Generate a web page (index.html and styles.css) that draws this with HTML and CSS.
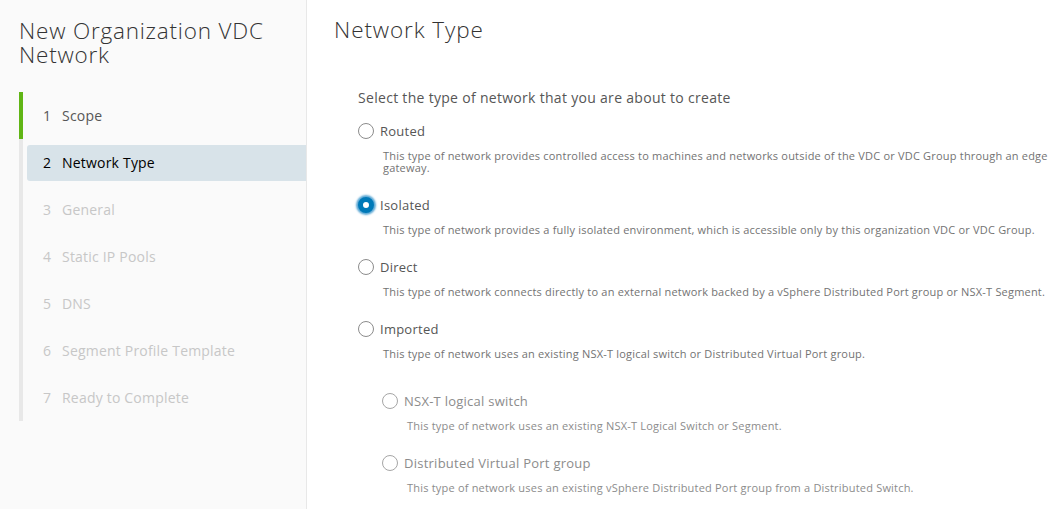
FILE: index.html
```html
<!DOCTYPE html>
<html lang="en">
<head>
<meta charset="utf-8">
<title>New Organization VDC Network</title>
<link rel="stylesheet" href="styles.css">
</head>
<body>
<div class="wizard">
  <aside class="sidebar">
    <h1 class="wizard-title">New Organization VDC Network</h1>
    <ol class="steps">
      <li class="step done"><div class="step-inner"><span class="num">1</span><span class="label">Scope</span></div></li>
      <li class="step current"><div class="step-inner"><span class="num">2</span><span class="label">Network Type</span></div></li>
      <li class="step disabled"><div class="step-inner"><span class="num">3</span><span class="label">General</span></div></li>
      <li class="step disabled"><div class="step-inner"><span class="num">4</span><span class="label">Static IP Pools</span></div></li>
      <li class="step disabled"><div class="step-inner"><span class="num">5</span><span class="label">DNS</span></div></li>
      <li class="step disabled"><div class="step-inner"><span class="num">6</span><span class="label">Segment Profile Template</span></div></li>
      <li class="step disabled"><div class="step-inner"><span class="num">7</span><span class="label">Ready to Complete</span></div></li>
    </ol>
  </aside>
  <main class="content">
    <h2 class="page-title">Network Type</h2>
    <div class="form">
      <p class="prompt">Select the type of network that you are about to create</p>

      <div class="option">
        <label class="radio"><span class="circle"></span><span class="opt-label">Routed</span></label>
        <p class="desc">This type of network provides controlled access to machines and networks outside of the VDC or VDC Group through an edge gateway.</p>
      </div>

      <div class="option">
        <label class="radio"><span class="circle checked"></span><span class="opt-label">Isolated</span></label>
        <p class="desc">This type of network provides a fully isolated environment, which is accessible only by this organization VDC or VDC Group.</p>
      </div>

      <div class="option">
        <label class="radio"><span class="circle"></span><span class="opt-label">Direct</span></label>
        <p class="desc">This type of network connects directly to an external network backed by a vSphere Distributed Port group or NSX-T Segment.</p>
      </div>

      <div class="option">
        <label class="radio"><span class="circle"></span><span class="opt-label">Imported</span></label>
        <p class="desc">This type of network uses an existing NSX-T logical switch or Distributed Virtual Port group.</p>
      </div>

      <div class="suboptions">
        <div class="option sub">
          <label class="radio"><span class="circle"></span><span class="opt-label">NSX-T logical switch</span></label>
          <p class="desc">This type of network uses an existing NSX-T Logical Switch or Segment.</p>
        </div>
        <div class="option sub">
          <label class="radio"><span class="circle"></span><span class="opt-label">Distributed Virtual Port group</span></label>
          <p class="desc">This type of network uses an existing vSphere Distributed Port group from a Distributed Switch.</p>
        </div>
      </div>
    </div>
  </main>
</div>
</body>
</html>
```

FILE: styles.css
```css
* { box-sizing: border-box; }
html, body {
  margin: 0;
  padding: 0;
  height: 100%;
  background: #ffffff;
  font-family: "Open Sans", "Noto Sans", sans-serif;
  color: #565656;
}
.wizard {
  display: flex;
  height: 509px;
  overflow: hidden;
}
.sidebar {
  width: 307px;
  flex: none;
  background: #fafafa;
  border-right: 1px solid #e8e8e8;
  padding: 19px 0 0 19px;
}
.wizard-title {
  margin: 0;
  font-size: 22.5px;
  line-height: 24px;
  font-weight: 300;
  letter-spacing: 0.8px;
  color: #333333;
  padding-right: 20px;
}
.steps {
  list-style: none;
  margin: 25px 0 0 0;
  padding: 0;
}
.step {
  border-left: 4px solid #e8e8e8;
  padding: 6px 0 5px 4px;
}
.step.done { border-left-color: #60b515; }
.step-inner {
  height: 36px;
  display: flex;
  align-items: center;
  padding-left: 16px;
  padding-bottom: 1px;
  font-size: 14px;
  letter-spacing: 0.2px;
  border-radius: 3px 0 0 3px;
}
.num { width: 19px; }
.step.done .step-inner { color: #565656; }
.step.current .step-inner { background: #d8e3e9; color: #000000; }
.step.disabled .step-inner { color: #c7c7c7; }

.content {
  flex: 1;
  padding: 18px 10px 0 27px;
  min-width: 0;
}
.page-title {
  margin: 0;
  font-size: 22.5px;
  line-height: 24px;
  font-weight: 300;
  letter-spacing: 0.9px;
  color: #333333;
}
.form {
  padding-left: 24px;
  margin-top: 46px;
}
.prompt {
  margin: 0 0 14px 0;
  font-size: 14px;
  line-height: 20px;
  letter-spacing: 0.3px;
  color: #565656;
}
.option { margin-bottom: 22px; }
.radio {
  display: flex;
  align-items: center;
  height: 18px;
  gap: 6px;
}
.circle {
  width: 16px;
  height: 16px;
  border-radius: 50%;
  border: 1px solid #8c8c8c;
  background: #ffffff;
  flex: none;
}
.circle.checked {
  border: 5.5px solid #0079b8;
  background: #ffffff;
  box-shadow: 0 0 2px 2px #5aa7d4;
}
.opt-label {
  font-size: 13px;
  letter-spacing: 0.25px;
  color: #565656;
}
.desc {
  margin: 10px 0 0 25px;
  font-size: 11px;
  line-height: 12px;
  letter-spacing: 0.2px;
  color: #737373;
}
.suboptions {
  padding-left: 24px;
  margin-top: 32px;
}
.sub .opt-label { color: #8c8c8c; }
.sub .circle { border-color: #a6a6a6; }
.sub .desc { color: #8c8c8c; }
```
